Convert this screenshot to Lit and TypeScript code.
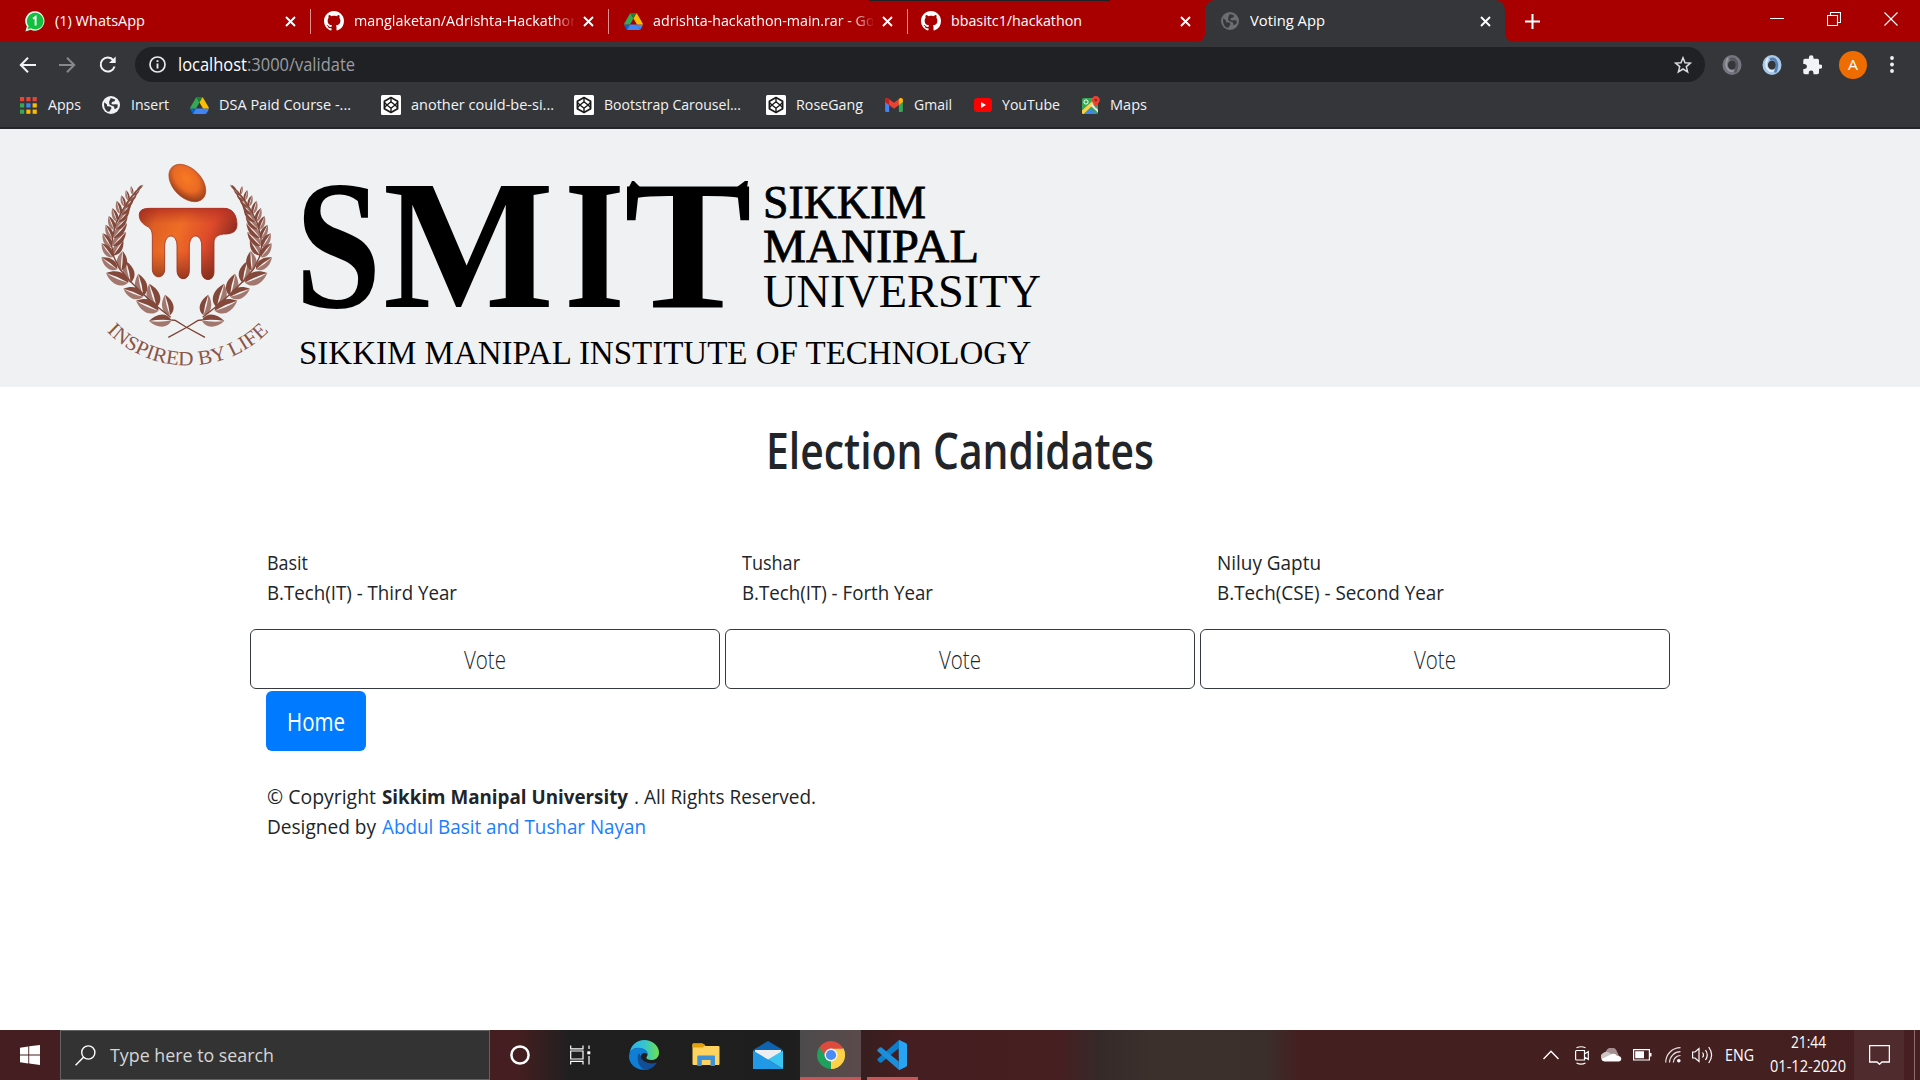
import { LitElement, html, svg, css } from "lit";
import { customElement } from "lit/decorators.js";

/** One line of text set to an exact width, baseline at `base` in a box of height `h`. */
const fit = (text: string, w: number, size: number, h: number, base: number, cls = "ui") => html`
  <svg class="fit ${cls}" width=${w} height=${h} font-size=${size}>
    <text x="0" y=${base} textLength=${w} lengthAdjust="spacingAndGlyphs">${text}</text>
  </svg>`;

const icon = (w: number, h: number, vb: string, body: unknown) =>
  html`<svg class="ico" width=${w} height=${h} viewBox=${vb}>${body}</svg>`;

const closeX = (c = "#fff") =>
  icon(11, 11, "0 0 11 11", svg`<path d="M1 1L10 10M10 1L1 10" stroke=${c} stroke-width="1.9" fill="none"/>`);

const whatsapp = icon(20, 21, "0 0 20 21", svg`
  <path d="M10.3 .3a9.7 9.7 0 1 1-4.6 18.5L.4 20.6l1.5-5.2A9.7 9.7 0 0 1 10.3 .3z" fill="#e8f6ea"/>
  <path d="M10.3 1.8a8.3 8.3 0 1 1-4.4 15.4l-3.3 1.1 1-3.3A8.3 8.3 0 0 1 10.3 1.8z" fill="#12bf3f"/>
  <path d="M8 7.7L10.6 5.8V14.6" stroke="#fff" stroke-width="1.9" fill="none"/>`);

const github = icon(20, 20, "0 0 16 16", svg`<path fill="#fff" d="M8 0C3.58 0 0 3.58 0 8c0 3.54 2.29 6.53 5.47 7.59.4.07.55-.17.55-.38 0-.19-.01-.82-.01-1.49-2.01.37-2.53-.49-2.69-.94-.09-.23-.48-.94-.82-1.13-.28-.15-.68-.52-.01-.53.63-.01 1.08.58 1.23.82.72 1.21 1.87.87 2.33.66.07-.52.28-.87.51-1.07-1.78-.2-3.64-.89-3.64-3.95 0-.87.31-1.59.82-2.15-.08-.2-.36-1.02.08-2.12 0 0 .67-.21 2.2.82.64-.18 1.32-.27 2-.27s1.36.09 2 .27c1.53-1.04 2.2-.82 2.2-.82.44 1.1.16 1.92.08 2.12.51.56.82 1.27.82 2.15 0 3.07-1.87 3.75-3.65 3.95.29.25.54.73.54 1.48 0 1.07-.01 1.93-.01 2.2 0 .21.15.46.55.38A8.01 8.01 0 0 0 16 8c0-4.42-3.58-8-8-8z"/>`);

const drive = icon(19, 17, "0 0 87.3 78", svg`
  <path d="M6.6 66.85l3.85 6.65c.8 1.4 1.95 2.5 3.3 3.3l13.75-23.8H0c0 1.55.4 3.1 1.2 4.5z" fill="#0066da"/>
  <path d="M43.65 25L29.9 1.2c-1.35.8-2.5 1.9-3.3 3.3L1.2 48.5A9.06 9.06 0 0 0 0 53h27.5z" fill="#34a853"/>
  <path d="M73.55 76.8c1.35-.8 2.5-1.9 3.3-3.3l7.65-13.2c.8-1.4 1.2-2.95 1.2-7.3H59.8l5.85 11.5z" fill="#4285f4"/>
  <path d="M43.65 25L57.4 1.2C56.05.4 54.5 0 52.9 0H34.4c-1.6 0-3.15.45-4.5 1.2z" fill="#188038"/>
  <path d="M59.8 53H27.5L13.75 76.8c1.35.8 2.9 1.2 4.5 1.2h50.8c1.6 0 3.15-.45 4.5-1.2z" fill="#4285f4"/>
  <path d="M73.4 26.5L60.7 4.5c-.8-1.4-1.95-2.5-3.3-3.3L43.65 25 59.8 53h27.45c0-1.55-.4-3.1-1.2-4.5z" fill="#fbbc04"/>`);

const globe = (c: string, bg: string, s = 18) => icon(s, s, "0 0 18 18", svg`
  <circle cx="9" cy="9" r="9" fill=${c}/>
  <path d="M2.2 6.3L5 8.4 5 10.2 8.3 10.4 9.6 12 7.6 15.6 5.6 15.8Q1.2 12.6 2.2 6.3zM8.8 2L13.2 3.6 12.6 5.3 10 6 9.4 8 11.2 8.6 13 8.2 15.8 8.6 15.4 11.8 12.6 13.2 12 10.6 9.2 9.6 7.2 8.2 7.2 5.6z" fill=${bg}/>`);

const codepen = icon(20, 20, "0 0 20 20", svg`
  <rect width="20" height="20" rx="1.5" fill="#fff"/>
  <g fill="none" stroke="#1a1a1a" stroke-width="1.7" stroke-linejoin="round">
    <path d="M10 2.6L16.6 6.3V13.7L10 17.4 3.4 13.7V6.3z"/>
    <path d="M10 6.8L14 10 10 13.2 6 10zM10 2.6V6.8M10 13.2V17.4M3.4 7.6L6 10 3.400 12.400M16.600 7.600L14 10 16.600 12.400" stroke-width="1.4"/>
  </g>`);

const appsGrid = icon(17, 17, "0 0 17 17", [
  ["#ea4335", "#ea4335", "#ea4335"], ["#34a853", "#4285f4", "#fbbc04"], ["#34a853", "#fbbc04", "#fbbc04"],
].map((r, y) => r.map((c, x) => svg`<rect x=${x * 6.3} y=${y * 6.3} width="4.2" height="4.2" fill=${c}/>`)));

const gmail = icon(18, 14, "0 0 19 15", svg`
  <path d="M0 3V13.6Q0 15 1.4 15H4.3V5z" fill="#4285f4"/><path d="M19 3V13.6Q19 15 17.6 15H14.7V5z" fill="#34a853"/>
  <path d="M0 4.2V2.2C0 .2 2-.6 3.4.5L9.5 5.2 15.6.5C17-.6 19 .2 19 2.2V4.2L14.7 7.6 9.5 11.5 4.3 7.6z" fill="#ea4335"/>
  <path d="M14.7 1.2L15.6.5C17-.6 19 .2 19 2.2V4.2L14.7 7.6z" fill="#fbbc04"/>
  <path d="M0 4.2V2.2C0 .2 2-.6 3.4.5L4.3 1.2V7.6z" fill="#c5221f"/>`);

const youtube = icon(18, 14, "0 0 18 14", svg`<rect width="18" height="14" rx="3.6" fill="#f00"/><path d="M7 4L12 7 7 10z" fill="#fff"/>`);

const maps = icon(18, 19, "0 0 18 19", svg`
  <rect x="0" y="2" width="16" height="16" rx="1.6" fill="#34a853"/>
  <path d="M0 14.4L12.6 3 14.6 5.6 1.6 18Q0 18 0 16.4z" fill="#fbd14b"/>
  <path d="M8.4 9.6L10.3 8 16 13.8V16.6z" fill="#e8eaed"/>
  <path d="M3 17.8L8.6 12.6 13.8 17.8z" fill="#4285f4"/>
  <circle cx="4" cy="6" r="2.1" fill="none" stroke="#fff" stroke-width="1"/>
  <path d="M13.8 0a4 4 0 0 1 4 4.1c0 3-3.4 4.4-4 8.3-.6-3.9-4-5.3-4-8.3A4 4 0 0 1 13.8 0z" fill="#ea4335"/><circle cx="13.8" cy="4.1" r="1.4" fill="#992018"/>`);

/* Laurel branch leaves, left side: base x, base y, tip x, tip y, fullness. */
const LEAVES: number[][] = [
  [270, 526, 255, 464, .34], [230, 502, 208, 431, .34], [190, 468, 175, 401, .34], [152, 428, 138, 364, .34], [124, 392, 128, 333, .34],
  [100, 346, 130, 300, .3], [98, 318, 138, 276, .28], [100, 294, 141, 250, .26], [107, 268, 143, 230, .26], [116, 246, 149, 208, .26],
  [126, 224, 154, 188, .26], [137, 203, 162, 171, .26], [149, 184, 171, 158, .26], [160, 166, 180, 146, .24], [171, 150, 190, 134, .2],
  [275, 541, 207, 543, .34], [236, 512, 168, 482, .34], [190, 470, 130, 446, .34], [145, 428, 78, 399, .34], [112, 388, 64, 352, .32],
  [98, 352, 65, 310, .3], [94, 322, 68, 280, .3], [97, 296, 77, 254, .28], [103, 270, 86, 228, .28], [112, 246, 97, 204, .26],
  [122, 222, 110, 182, .26], [134, 200, 124, 166, .26], [146, 182, 138, 150, .24], [158, 164, 153, 138, .2],
];
const leafPath = ([x1, y1, x2, y2, f]: number[]) => {
  const dx = x2 - x1, dy = y2 - y1, nx = -dy * f, ny = dx * f;
  const at = (t: number, s: number) => `${(x1 + dx * t + nx * s).toFixed(1)} ${(y1 + dy * t + ny * s).toFixed(1)}`;
  return { a: `M${x1} ${y1}C${at(.2, 1.1)} ${at(.65, 1)} ${x2} ${y2}Q${at(.5, .2)} ${x1} ${y1}z`,
           b: `M${x1} ${y1}C${at(.2, -1.1)} ${at(.65, -1)} ${x2} ${y2}Q${at(.5, -.25)} ${x1} ${y1}z` };
};
const branch = svg`
  <path d="M375 592L318 561 286 541 274 540M272 532L232 500 190 463 150 423 120 388 102 352 95 318 98 288 108 250 125 215 150 175 184 137" fill="none" stroke="#7b4032" stroke-width="4"/>
  ${LEAVES.map(leafPath).map((p) => svg`<path d=${p.a} fill="#84483a"/><path d=${p.b} fill="#84483a" opacity=".72"/>`)}`;

const MARK = "M212 205H432C458 205 470 225 471 252 472 275 456 281 438 282 416 282 403 290 402 306V396C402 426 366 426 365 396V318C365 278 329 278 328 318V392C328 424 292 424 291 392V318C291 278 255 278 254 318V388C254 418 218 418 217 388V290C217 270 210 262 196 256 182 246 177 236 178 222 180 208 194 205 212 205Z";

const emblem = html`<svg class="emblem" width="220" height="240" viewBox="0 0 660 720">
  <defs>
    <radialGradient id="sun" cx=".42" cy=".42" r=".62"><stop offset="0" stop-color="#f97a22"/><stop offset=".55" stop-color="#ea6a24"/><stop offset="1" stop-color="#8f3a1c"/></radialGradient>
    <linearGradient id="tb" x1="0" x2="1" y1="0" y2=".3"><stop offset="0" stop-color="#8f3420"/><stop offset=".2" stop-color="#e05f24"/><stop offset=".45" stop-color="#f07026"/><stop offset=".75" stop-color="#df4b2b"/><stop offset="1" stop-color="#8c2a22"/></linearGradient>
    <linearGradient id="dn" x1="0" x2="0" y1="0" y2="1"><stop offset="0" stop-color="#b02a22" stop-opacity=".75"/><stop offset=".22" stop-color="#c03a22" stop-opacity=".05"/><stop offset=".6" stop-color="#a33f20" stop-opacity="0"/><stop offset="1" stop-color="#7d2f1c" stop-opacity=".8"/></linearGradient>
    <path id="arc" d="M80 574A340 340 0 0 0 572 568"/>
  </defs>
  <ellipse cx="322" cy="129" rx="66" ry="43" transform="rotate(46 322 129)" fill="url(#sun)" stroke="#a8431f" stroke-width="2"/>
  <path d=${MARK} fill="url(#tb)" stroke="#9c3220" stroke-width="2.5"/>
  <path d=${MARK} fill="url(#dn)"/>
  ${branch}<g transform="translate(640 0) scale(-1 1)">${branch}</g>
  <text class="serif" font-size="61" fill="#8a5546"><textPath href="#arc" textLength="542" lengthAdjust="spacingAndGlyphs">INSPIRED BY LIFE</textPath></text>
</svg>`;

const wordmark = html`<svg class="serif wordmark" width="780" height="240" viewBox="280 140 780 240">
  <g font-weight="bold" font-size="185">
    <text x="0" y="307" transform="translate(295 0) scale(.84 1)">S</text>
    <text x="383" y="307" textLength="171" lengthAdjust="spacingAndGlyphs">M</text>
    <text x="564" y="307" textLength="61" lengthAdjust="spacingAndGlyphs">I</text>
    <text x="624" y="307" textLength="128" lengthAdjust="spacingAndGlyphs">T</text>
  </g>
  <path d="M629 187L632 181H634L640 187zM737 187L745 181H748L747 188z"/>
  <g font-size="47" stroke="#000" stroke-width=".8">
    <text x="763" y="217.500" textLength="163" lengthAdjust="spacingAndGlyphs">SIKKIM</text>
    <text x="763" y="262" textLength="216" lengthAdjust="spacingAndGlyphs">MANIPAL</text>
    <text x="763" y="307" textLength="278" lengthAdjust="spacingAndGlyphs" stroke-width="0">UNIVERSITY</text>
  </g>
  <text x="299" y="364" font-size="33.500" textLength="732" lengthAdjust="spacingAndGlyphs">SIKKIM MANIPAL INSTITUTE OF TECHNOLOGY</text>
</svg>`;

const tabs = [
  { w: 300, pl: 15, ic: whatsapp, t: "(1) WhatsApp", tw: 90 },
  { w: 298, pl: 14, ic: github, t: "manglaketan/Adrishta-Hackathon", tw: 225, fade: true },
  { w: 299, pl: 16, ic: drive, t: "adrishta-hackathon-main.rar - Google Drive", tw: 288, fade: true },
  { w: 298, pl: 14, ic: github, t: "bbasitc1/hackathon", tw: 131 },
  { w: 300, pl: 16, ic: globe("#6a6d71", "#35363a"), t: "Voting App", tw: 75, active: true },
];

const bookmarks = [
  { w: 82, g: 28, ic: appsGrid, t: "Apps", tw: 33 },
  { w: 88, g: 29, ic: globe("#f1f3f4", "#35363a"), t: "Insert", tw: 38 },
  { w: 191, g: 29, ic: drive, t: "DSA Paid Course -...", tw: 132 },
  { w: 193, g: 30, ic: codepen, t: "another could-be-si...", tw: 143 },
  { w: 192, g: 30, ic: codepen, t: "Bootstrap Carousel...", tw: 137 },
  { w: 119, g: 30, ic: codepen, t: "RoseGang", tw: 67 },
  { w: 89, g: 29, ic: gmail, t: "Gmail", tw: 38 },
  { w: 108, g: 28, ic: youtube, t: "YouTube", tw: 58 },
  { w: 70, g: 28, ic: maps, t: "Maps", tw: 37 },
];

const candidates = [
  { n: "Basit", nw: 41, c: "B.Tech(IT) - Third Year", cw: 190 },
  { n: "Tushar", nw: 58, c: "B.Tech(IT) - Forth Year", cw: 191 },
  { n: "Niluy Gaptu", nw: 104, c: "B.Tech(CSE) - Second Year", cw: 227 },
];

const ring = (a: string, b: string, c: string) => icon(20, 20, "0 0 20 20", svg`
  <ellipse cx="10" cy="10" rx="6.800" ry="7.200" fill="none" stroke=${a} stroke-width="5.400"/>
  <path d="M8 4.500C13 2 17.500 8 13 17.500" fill="none" stroke=${b} stroke-width="2.600"/>
  <path d="M12 15.500C6 18 1.500 11 6 3" fill="none" stroke=${c} stroke-width="1.600"/>`);

const edge = icon(30, 30, "0 0 30 30", svg`
  <defs><linearGradient id="e1" x1="0" x2="1"><stop offset="0" stop-color="#2fb1ee"/><stop offset=".5" stop-color="#35c4cf"/><stop offset="1" stop-color="#6fe04e"/></linearGradient></defs>
  <path d="M.5 13C2 5 8 0 15 0 23.500 0 30 6 30 12.500 30 17.500 26.500 20 22.500 20 19 20 17.300 18.800 17.300 17.800 17.300 17 18.600 16.500 18.600 14.300 18.600 10.500 14 8 9.500 8 5 8 2 10 .5 13z" fill="url(#e1)"/>
  <path d="M.2 14.500C1.500 9.500 6 7.600 10 7.700 15 8 18.600 11 18.500 14.500 15 11 11.500 14 11.500 18 11.500 23 16 29 21 28.500 10 33-1.500 25 .2 14.500z" fill="#0f7fd6"/>
  <path d="M9.400 14C7 20 10.500 30 18 29.800 22.500 29 26.500 25.500 27.600 22.500 22 25 12.500 22 11.700 16.500 11 14.500 10.500 13 9.400 14z" fill="#124f97"/>`);

const folder = icon(28, 24, "0 0 28 24", svg`
  <path d="M.5 1.500Q.5 .5 1.500 .5H10.500L13.500 3H26.500Q27.500 3 27.500 4V21Q27.500 22 26.500 22H1.500Q.5 22 .5 21z" fill="#ffd35f"/>
  <path d="M.5 1.500Q.5 .5 1.500 .5H10.500L13.300 2 11 4.500H.5z" fill="#e3a008"/>
  <path d="M5.300 23V13.500Q5.300 12.500 6.300 12.500H22Q23 12.500 23 13.500V23H18.500V17H9.800V23z" fill="#3c92d6"/>`);

const mail = icon(30, 28, "0 0 30 28", svg`
  <path d="M0 9L15 0 30 9 26 12H4z" fill="#0f62ae"/><path d="M2 9H28V12L15 19 2 12z" fill="#eeeef2"/>
  <path d="M0 9.500L15 18.500 30 28H0z" fill="#2199e6"/><path d="M30 9.500V28L15 18.500z" fill="#3bc4f2"/>`);

const chrome = icon(28, 28, "0 0 28 28", svg`
  <path d="M14 14L1.900 7A14 14 0 0 1 26.100 7z" fill="#dd4b3e"/>
  <path d="M14 14L26.100 7A14 14 0 0 1 14 28z" fill="#ffd148"/><path d="M14 14V28A14 14 0 0 1 1.900 7z" fill="#1fa15d"/>
  <path d="M14 7.600H26.400A14 14 0 0 1 14 28L19.500 17z" fill="#ffd148"/><path d="M14 7.600H26.400L26.100 7H14z" fill="#dd4b3e"/><path d="M8.400 17L1.900 7 8 7.500z" fill="#1fa15d"/>
  <path d="M2.600 6L8 14.500 14 7.800V4z" fill="#dd4b3e"/>
  <circle cx="14" cy="14" r="6.500" fill="#f3f3f3"/><circle cx="14" cy="14" r="5.100" fill="#4c8bf5"/>`);

const vscode = icon(30, 30, "0 0 30 30", svg`
  <path d="M22 0L29 3.300Q30 4 30 5V25Q30 26 29 26.700L22 30 21.500 8.500 4.500 22.500Q3.500 23 2.700 22.400L.7 20.500Q0 19.600 .7 18.700z" fill="#0d7fca"/>
  <path d="M22 30L.7 11.300Q0 10.400 .7 9.500L2.700 7.600Q3.500 7 4.500 7.500L21.800 21.500z" fill="#1c8fdc"/>
  <path d="M22 0L29 3.300Q30 4 30 5V25Q30 26 29 26.700L22 30z" fill="#28a5f2"/>`);

const stroke = (w: number, h: number, d: string, sw = 1.2, c = "#fff") =>
  icon(w, h, `0 0 ${w} ${h}`, svg`<path d=${d} fill="none" stroke=${c} stroke-width=${sw}/>`);

@customElement("app-root")
export class AppRoot extends LitElement {
  static styles = css`
    :host { display: block; width: 1920px; height: 1080px; overflow: hidden; background: #fff; font-family: "Open Sans", "Noto Sans", sans-serif; }
    * { box-sizing: border-box; }
    svg { display: block; flex: none; }
    .fit { overflow: visible; fill: currentColor; }
    .ui { font-family: "Open Sans", "Noto Sans", sans-serif; }
    .bold { font-weight: 700; }
    .semi { font-weight: 600; }
    .light { font-weight: 300; }
    .serif { font-family: "Liberation Serif", serif; }
    .screen { display: flex; flex-direction: column; height: 1080px; position: relative; }
    .row { display: flex; align-items: center; }

    .tabstrip { display: flex; height: 42px; background: #a80000; padding-left: 10px; color: #fff; flex: none; }
    .notch { position: absolute; left: 869px; top: 0; width: 241px; height: 1px; background: #202124; }
    .tab { display: flex; align-items: center; height: 42px; position: relative; padding-right: 14px; flex: none; }
    .tab.line::after { content: ""; position: absolute; right: -1px; top: 9px; width: 1px; height: 25px; background: #dc9090; }
    .tab.active { background: #35363a; border-radius: 10px 10px 0 0; }
    .tab.active::before, .tab.active::after { content: ""; position: absolute; bottom: 0; width: 8px; height: 8px; }
    .tab.active::before { left: -8px; background: radial-gradient(circle at 0 0, transparent 7.5px, #35363a 8px); }
    .tab.active::after { right: -8px; background: radial-gradient(circle at 100% 0, transparent 7.5px, #35363a 8px); }
    .slot { width: 30px; flex: none; display: flex; align-items: center; }
    .name { flex: 1; overflow: hidden; margin-right: 9px; }
    .name.fade { -webkit-mask-image: linear-gradient(90deg, #000 90%, transparent 101%); mask-image: linear-gradient(90deg, #000 90%, transparent 101%); }
    .plus { margin-left: 20px; align-self: center; }
    .winctl { margin-left: auto; display: flex; gap: 43px; padding: 12px 22px 0 0; }

    .toolbar { display: flex; align-items: center; height: 45px; background: #35363a; padding-left: 18px; padding-right: 22px; flex: none; }
    .nav { display: flex; align-items: center; width: 117px; gap: 21px; }
    .omnibox { display: flex; align-items: center; width: 1570px; height: 35px; border-radius: 18px; background: #202124; padding: 0 13px 0 14px; }
    .url { display: flex; margin-left: 12px; color: #fff; flex: 1; }
    .dim { color: #9a9da1; }
    .exts { display: flex; align-items: center; flex: 1; padding-left: 17px; gap: 20px; }
    .avatar { width: 28px; height: 28px; border-radius: 50%; background: #ef6c00; color: #fff; display: flex; justify-content: center; align-items: center; margin-left: -3px; }
    .dots { margin-left: 3px; }

    .bookmarks { display: flex; height: 42px; padding: 0 0 4px 20px; background: #35363a; border-bottom: 2px solid #252629; color: #f1f3f4; flex: none; align-items: center; }
    .mark { display: flex; align-items: center; flex: none; }
    .mark .pic { flex: none; }

    .hero { height: 258px; background: #f0f1f3; display: flex; padding: 11px 0 0 80px; flex: none; }
    .wordmark { margin-left: -20px; }
    .page { flex: 1; background: #fff; color: #212529; display: flex; flex-direction: column; }
    .title { display: flex; justify-content: center; padding-top: 32px; margin: 0; font-weight: 600; }
    .cards { display: grid; grid-template-columns: 470px 470px 470px; gap: 5px; margin: 60px 0 0 250px; }
    .who { padding-left: 16.5px; height: 80px; }
    .vote { height: 60px; width: 470px; border: 1px solid #343a40; border-radius: 6px; background: #fff; color: #22272c; padding: 0; display: flex; justify-content: center; align-items: center; }
    .home { height: 60px; width: 100px; border: 0; padding: 0; margin: 2px 0 0 266px; border-radius: 6px; background: #007bff; color: #fff; display: flex; justify-content: center; align-items: center; }
    .foot { margin: 32px 0 0 267px; }
    .foot .row { gap: 6px; }
    .link { color: #1a7dff; }

    .taskbar { height: 50px; flex: none; display: flex; align-items: center; color: #fff;
      background: linear-gradient(90deg, #441e20 0, #441e20 520px, #1f1f1f 570px, #1e1e1e 790px, #441e20 900px, #461f21 1060px, #352a29 1100px, #3b302c 1150px, #3a2f2b 1265px, #441f20 1300px, #451f21 1920px); }
    .start { width: 60px; display: flex; justify-content: center; }
    .search { width: 430px; height: 50px; background: #333; border: 1px solid #626262; display: flex; align-items: center; padding-left: 14px; gap: 14px; color: #d6d6d6; }
    .app { height: 50px; display: flex; align-items: center; justify-content: center; flex: none; }
    .app.cortana { width: 60px; }
    .app.view { width: 60px; }
    .app.w { width: 62px; }
    .app.on { width: 61px; background: linear-gradient(90deg, #4c4b4b, #5b4a4b); border-bottom: 3px solid #c4575a; padding-top: 3px; }
    .app.open { width: 51px; border-bottom: 3px solid #c4575a; margin-left: 6px; padding: 3px 2px 0 0; }
    .tray { margin-left: auto; height: 50px; display: flex; align-items: center; }
    .clock { display: flex; flex-direction: column; align-items: center; width: 76px; margin: 0 8px 0 16px; }
    .note { width: 50px; height: 50px; background: #502b2d; display: flex; align-items: center; justify-content: center; }
    .peek { width: 6px; height: 50px; border-left: 1px solid #8a6c6d; margin-left: 10px; }
    .g1 { margin-left: 16px; } .g2 { margin-left: 12px; } .g3 { margin-left: 11px; } .g4 { margin-left: 13px; } .g5 { margin-left: 11px; } .g6 { margin-left: 12px; }
  `;

  render() {
    return html`<div class="screen">
      <div class="tabstrip">
        ${tabs.map((t, i) => html`
          <div class="tab ${t.active ? "active" : ""} ${i < 3 ? "line" : ""}" style="width:${t.w}px;padding-left:${t.pl}px">
            <div class="slot" style="width:${30 - (t.pl === 16 ? 1 : 0)}px">${t.ic}</div>
            <div class="name ${t.fade ? "fade" : ""}">${fit(t.t, t.tw, 14.8, 24, 17)}</div>
            ${closeX()}
          </div>`)}
        <div class="plus">${stroke(15, 15, "M7.5 0V15M0 7.5H15", 2)}</div>
        <div class="winctl">
          ${stroke(14, 14, "M0 6.5H14", 1)}
          ${stroke(14, 14, "M.5 3.5H10.5V13.500H.5zM3.500 3.500V.5H13.500V10.500H10.500", 1.1)}
          ${stroke(14, 14, "M.5 .5L13.500 13.500M13.500 .5L.5 13.500", 1.1)}
        </div>
        <div class="notch"></div>
      </div>

      <div class="toolbar">
        <div class="nav">
          ${stroke(19, 16, "M18 8H3M10 .8L2.800 8 10 15.200", 2, "#f1f3f4")}
          ${stroke(19, 16, "M1 8H16M9 .8L16.200 8 9 15.200", 2, "#87888b")}
          ${icon(19, 19, "0 0 20 20", svg`<path d="M16.200 5.600A7.400 7.400 0 1 0 17.400 12" fill="none" stroke="#f1f3f4" stroke-width="2.100"/><path d="M18.600 1.500V8.500H11.600z" fill="#f1f3f4"/>`)}
        </div>
        <div class="omnibox">
          ${icon(17, 17, "0 0 17 17", svg`<circle cx="8.500" cy="8.500" r="7.500" fill="none" stroke="#e8eaed" stroke-width="1.700"/><path d="M8.500 7.400V12.600M8.500 4.200V6" stroke="#e8eaed" stroke-width="1.900"/>`)}
          <div class="url">${fit("localhost", 69, 17.5, 28, 20)}<span class="dim">${fit(":3000/validate", 108, 17.5, 28, 20)}</span></div>
          ${icon(18, 18, "0 0 18 18", svg`<path d="M9 1.800L11 6.700 16.400 7.100 12.300 10.600 13.600 15.900 9 13 4.400 15.900 5.700 10.600 1.600 7.100 7 6.700z" fill="none" stroke="#dadce0" stroke-width="1.500"/>`)}
        </div>
        <div class="exts">
          ${ring("#74777f", "#55575d", "#9b9ea6")}
          ${ring("#a9c9e8", "#557fae", "#e4f0fa")}
          ${icon(20, 20, "0 0 20 20", svg`<path d="M18.200 9.500H17V5.500Q17 3.800 15.300 3.800H11.500V2.600A2.300 2.300 0 0 0 6.900 2.600V3.800H3Q1.300 3.800 1.300 5.500V9H2.500A2.500 2.500 0 0 1 2.500 14H1.300V17.500Q1.300 19.200 3 19.200H6.700V18A2.400 2.400 0 0 1 11.500 18V19.200H15.300Q17 19.200 17 17.500V13.800H18.200A2.150 2.150 0 0 0 18.200 9.500z" fill="#f1f3f4"/>`)}
          <div class="avatar">${fit("A", 10, 14.5, 20, 15)}</div>
          <div class="dots">${icon(4, 17, "0 0 4 17", [2, 8.5, 15].map((y) => svg`<circle cx="2" cy=${y} r="1.900" fill="#f1f3f4"/>`))}</div>
        </div>
      </div>

      <div class="bookmarks">
        ${bookmarks.map((b) => html`<div class="mark" style="width:${b.w}px"><div class="pic" style="width:${b.g}px">${b.ic}</div>${fit(b.t, b.tw, 14.8, 24, 17)}</div>`)}
      </div>

      <div class="hero">${emblem}${wordmark}</div>

      <div class="page">
        <h1 class="title">${fit("Election Candidates", 388, 51.5, 70, 50, "ui semi")}</h1>
        <div class="cards">
          ${candidates.map((c) => html`<div>
            <div class="who">${fit(c.n, c.nw, 19.5, 30, 21)}${fit(c.c, c.cw, 19.5, 30, 21)}</div>
            <button class="vote">${fit("Vote", 42, 25.5, 34, 27, "ui light")}</button>
          </div>`)}
        </div>
        <button class="home">${fit("Home", 58, 25.5, 34, 27)}</button>
        <div class="foot">
          <div class="row">${fit("© Copyright", 109, 19.5, 30, 21)}${fit("Sikkim Manipal University", 246, 19.5, 30, 21, "ui bold")}${fit(". All Rights Reserved.", 182, 19.5, 30, 21)}</div>
          <div class="row">${fit("Designed by", 109, 19.5, 30, 21)}<span class="link">${fit("Abdul Basit and Tushar Nayan", 264, 19.5, 30, 21)}</span></div>
        </div>
      </div>

      <div class="taskbar">
        <div class="start">${icon(20, 20, "0 0 20 20", svg`<path d="M0 2.700L8.300 1.500V9.500H0zM9.200 1.300L20 0V9.500H9.200zM0 10.400H8.300V18.500L0 17.300zM9.200 10.400H20V20L9.200 18.600z" fill="#fff"/>`)}</div>
        <div class="search">
          ${icon(21, 21, "0 0 21 21", svg`<circle cx="13.300" cy="7.500" r="6.600" fill="none" stroke="#fff" stroke-width="1.400"/><path d="M8.500 12.300L.6 20.300" stroke="#fff" stroke-width="1.500"/>`)}
          ${fit("Type here to search", 164, 19, 30, 22)}
        </div>
        <div class="app cortana">${icon(20, 20, "0 0 20 20", svg`<circle cx="10" cy="10" r="8.600" fill="none" stroke="#fff" stroke-width="2.500"/>`)}</div>
        <div class="app view">${icon(21, 20, "0 0 21 20", svg`<path d="M.7 .5V3.800H13V.5M.7 19.500V16.300H13V19.500M.7 6H13V14H.7zM19 .5V4M19 11V19.500" fill="none" stroke="#fff" stroke-width="1.200"/><path d="M17.300 6.300H20.300V9.300H17.300z" fill="#fff"/>`)}</div>
        <div class="app w" style="margin-left:3px">${edge}</div>
        <div class="app w">${folder}</div>
        <div class="app w" style="width:61px">${mail}</div>
        <div class="app on" style="margin-left:2px">${chrome}</div>
        <div class="app open">${vscode}</div>

        <div class="tray">
          ${stroke(16, 10, "M.5 9L8 1.200 15.500 9", 1.4)}
          <div class="g1">${icon(14, 19, "0 0 14 19", svg`<path d="M1.500 4.500H9.500V14H1.500Q.6 14 .6 13V5.500Q.6 4.500 1.500 4.500zM9.500 8L13.300 5.500V13.500L9.500 11M1.500 1.800Q6 -.3 10.500 1.800M1.500 17Q6 19.300 10.500 17" fill="none" stroke="#fff" stroke-width="1.200"/>`)}</div>
          <div class="g2">${icon(21, 14, "0 0 21 14", svg`<path d="M5 7A5.600 5.600 0 0 1 16 3.500L18 8 8 11z" fill="#a58f90"/><path d="M4.300 13A4.200 4.200 0 0 1 2.300 5 5 5 0 0 1 8 4.500L17 11z" fill="#cfc5c5"/><path d="M3.500 13.500Q1 13 .5 11L11.500 5.800Q14.500 5.200 16 7.700 20.500 8 20.300 11.200 20 13 18 13.500z" fill="#fff"/>`)}</div>
          <div class="g3">${icon(19, 12, "0 0 19 12", svg`<path d="M.6 .6H16.400V11H.6z" fill="none" stroke="#fff" stroke-width="1.200"/><path d="M2.200 2.300H11V9.300H2.200zM17 4H18.500V7.500H17z" fill="#fff"/>`)}</div>
          <div class="g4">${icon(16, 16, "0 0 16 16", svg`<path d="M.7 15.500A14.800 14.800 0 0 1 15.500 .7M4.500 15.500A11 11 0 0 1 15.500 4.700M8.300 15.500A7.200 7.200 0 0 1 15.500 8.500" fill="none" stroke="#e9e2e2" stroke-width="1.200"/><circle cx="13.800" cy="13.800" r="1.800" fill="#fff"/>`)}</div>
          <div class="g5">${icon(21, 18, "0 0 21 18", svg`<path d="M.6 6H3L7 2.500V15.500L3 12H.6zM10.500 6.500Q12.500 9 10.500 11.500M13.500 4Q17 9 13.500 14M16.700 1Q22.500 9 16.700 17" fill="none" stroke="#fff" stroke-width="1.200"/>`)}</div>
          <div class="g6">${fit("ENG", 29, 15.5, 24, 18)}</div>
          <div class="clock">${fit("21:44", 35, 15.5, 22, 15)}${fit("01-12-2020", 76, 15.5, 22, 17)}</div>
          <div class="note">${stroke(21, 20, "M.6 .6H20.400V17H13L10.500 19.300 8 17H.6z", 1.3)}</div>
          <div class="peek"></div>
        </div>
      </div>
    </div>`;
  }
}
